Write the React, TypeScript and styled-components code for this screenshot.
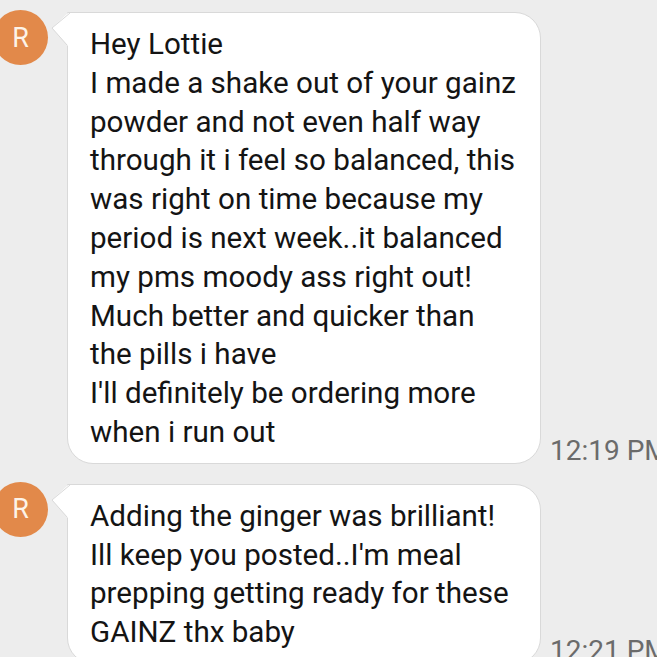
import React from "react";
import styled, { createGlobalStyle } from "styled-components";

const GlobalStyle = createGlobalStyle`
  html, body {
    margin: 0;
    padding: 0;
    background: #ededed;
    overflow: hidden;
  }
  body {
    font-family: Roboto, "Noto Sans", sans-serif;
  }
`;

const Thread = styled.div`
  width: 657px;
  height: 657px;
  overflow: hidden;
  background: #ededed;
  display: flex;
  flex-direction: column;
  gap: 20px;
  padding-top: 12px;
  box-sizing: border-box;
`;

const Row = styled.div`
  display: flex;
  align-items: flex-end;
  flex-shrink: 0;
`;

const AvatarCol = styled.div`
  width: 52px;
  align-self: stretch;
  position: relative;
  flex-shrink: 0;
`;

const Avatar = styled.div`
  position: absolute;
  left: -7px;
  top: -2px;
  width: 55px;
  height: 55px;
  border-radius: 50%;
  background: #e2894a;
  color: #fdf3e8;
  display: flex;
  align-items: center;
  justify-content: flex-end;
  padding-right: 19px;
  box-sizing: border-box;
  font-size: 27px;
`;

const BubbleWrap = styled.div`
  position: relative;
  margin-left: 15px;
`;

const Tail = styled.svg`
  position: absolute;
  left: -16px;
  top: 0;
`;

const Bubble = styled.div`
  width: 474px;
  box-sizing: border-box;
  background: #ffffff;
  border: 1px solid #d9d9d9;
  border-radius: 0 26px 26px 26px;
  padding: 12px 18px 11px 22px;
  font-size: 29.6px;
  line-height: 38.8px;
  color: #141414;
  white-space: pre;
`;

const Time = styled.div<{ $drop?: number }>`
  margin-left: 9px;
  margin-bottom: ${(p) => p.$drop ?? -3}px;
  font-size: 28px;
  color: #6b6b6b;
  white-space: nowrap;
`;

const messages = [
  {
    text:
      "Hey Lottie\nI made a shake out of your gainz\npowder and not even half way\nthrough it i feel so balanced, this\nwas right on time because my\nperiod is next week..it balanced\nmy pms moody ass right out!\nMuch better and quicker than\nthe pills i have\nI'll definitely be ordering more\nwhen i run out",
    time: "12:19 PM",
  },
  {
    text:
      "Adding the ginger was brilliant!\nIll keep you posted..I'm meal\nprepping getting ready for these\nGAINZ thx baby",
    time: "12:21 PM",
  },
];

const App: React.FC = () => {
  return (
    <>
      <GlobalStyle />
      <Thread>
        {messages.map((m, i) => (
          <Row key={i}>
            <AvatarCol>
              <Avatar>R</Avatar>
            </AvatarCol>
            <BubbleWrap>
              <Tail width="20" height="36" viewBox="0 0 20 36">
                <path d="M17 1 L19 1 L19 34 L17 34 L1 16 Z" fill="#ffffff" />
                <path d="M19 1 L1 16 L16 33" fill="none" stroke="#d9d9d9" strokeWidth="1" />
              </Tail>
              <Bubble>{m.text}</Bubble>
            </BubbleWrap>
            <Time>{m.time}</Time>
          </Row>
        ))}
      </Thread>
    </>
  );
};

export default App;
